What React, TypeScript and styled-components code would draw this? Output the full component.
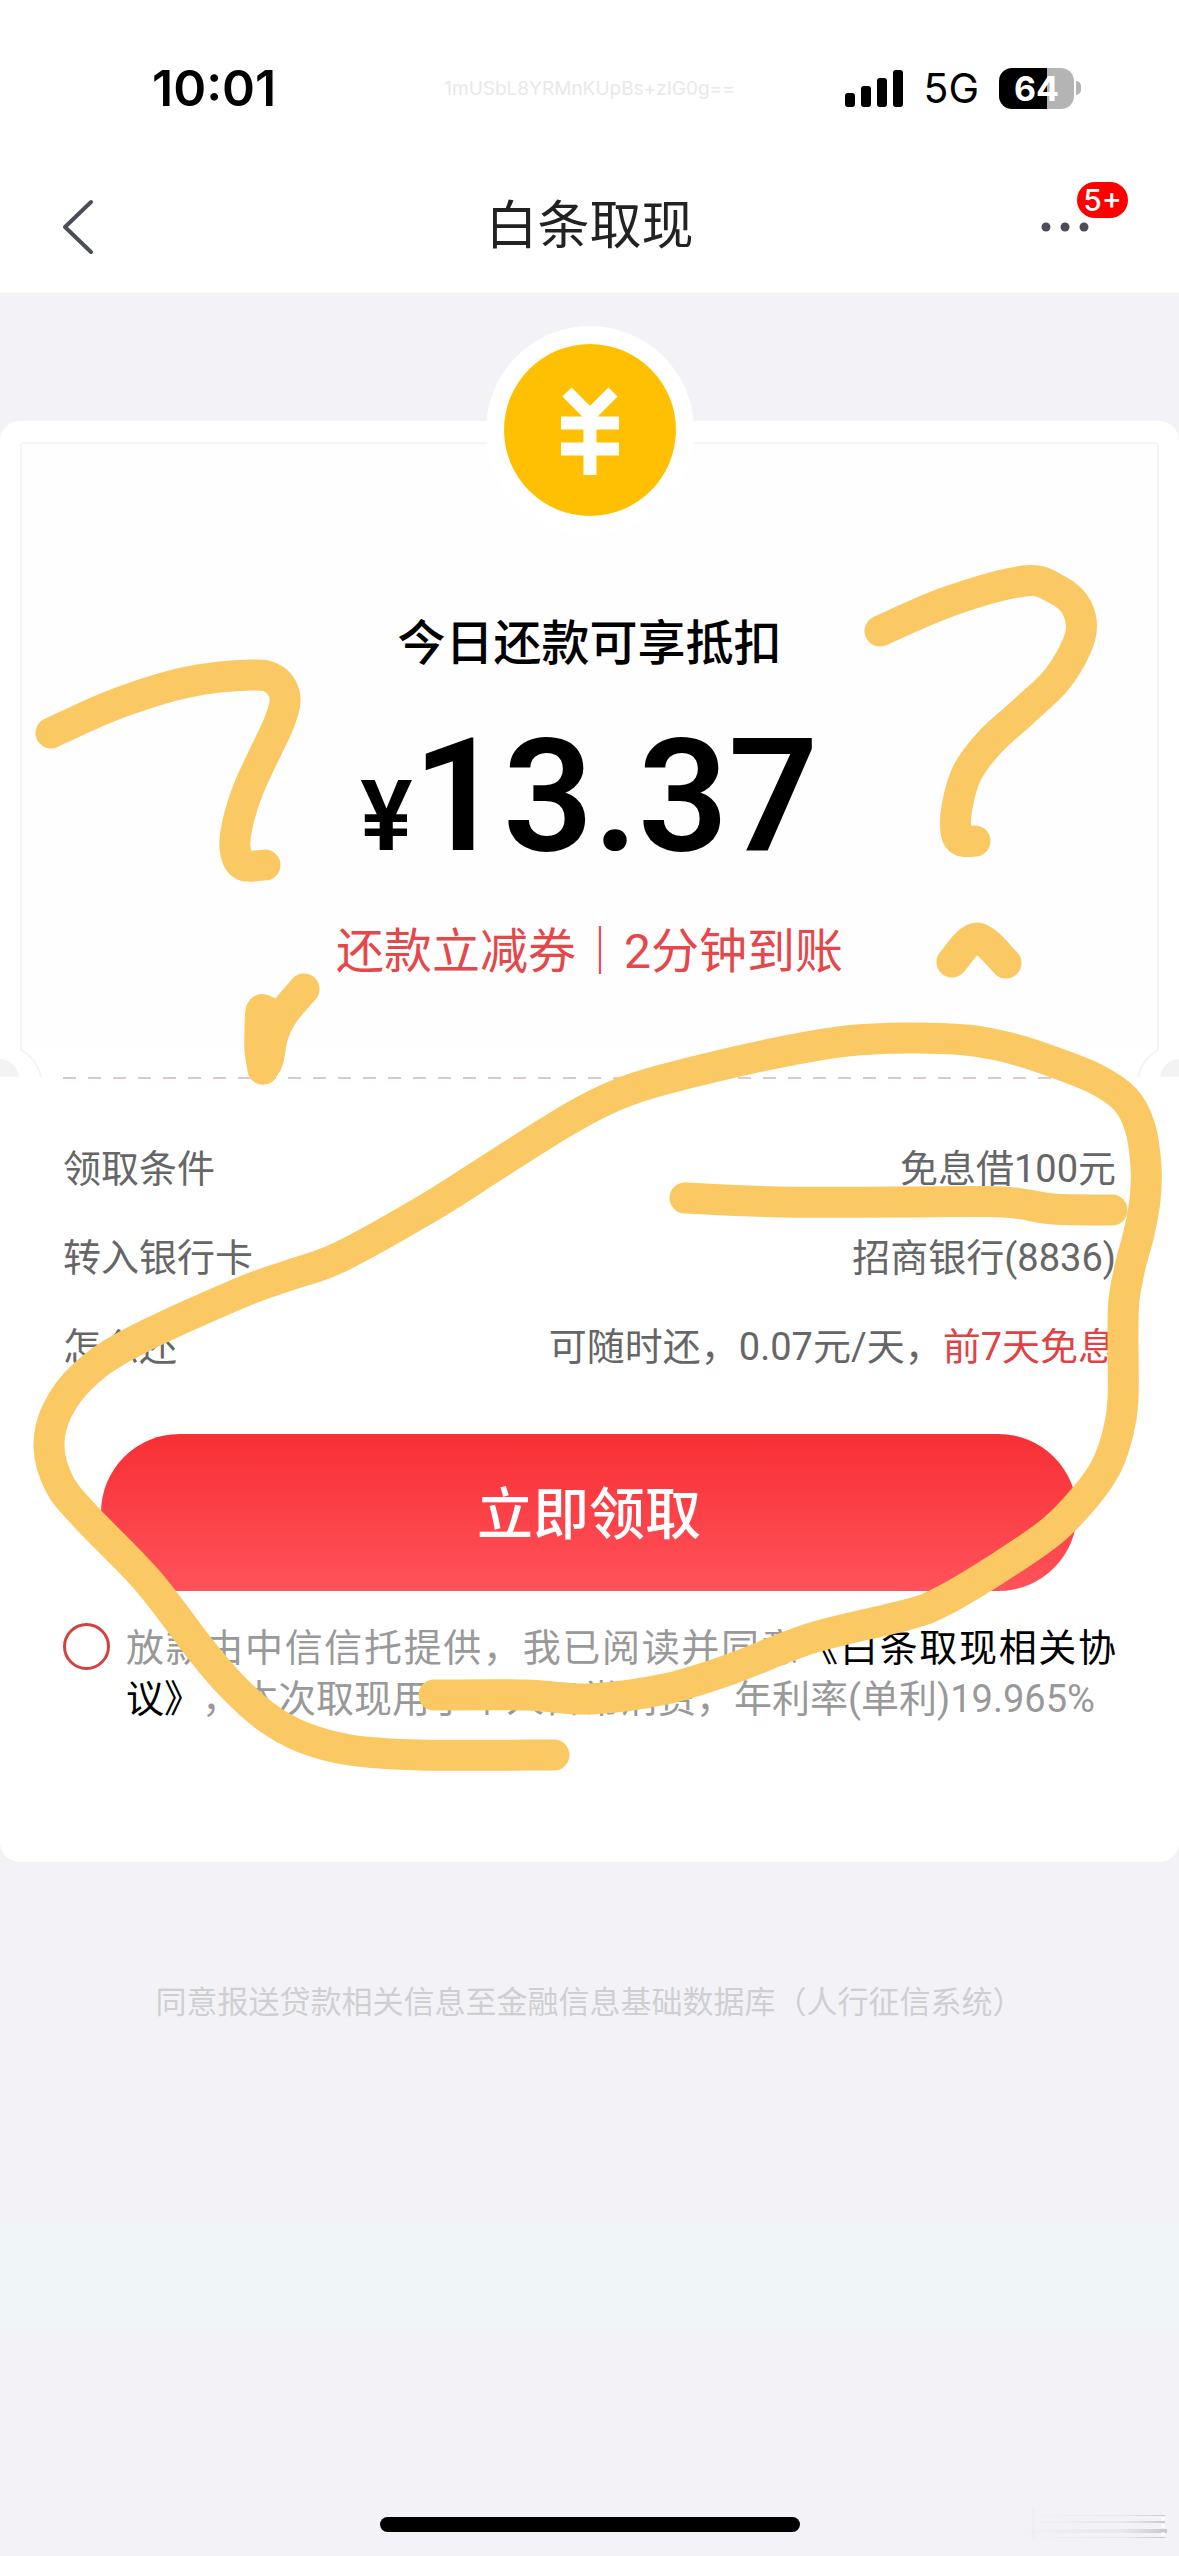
import React from 'react';
import styled, { createGlobalStyle } from 'styled-components';

const GlobalStyle = createGlobalStyle`
  *, *::before, *::after { box-sizing: border-box; }
  body {
    margin: 0;
    background: #f3f3f7;
    font-family: Roboto, "Noto Sans CJK SC", sans-serif;
    color: #000;
  }
`;

const latin = 'Inter, "Noto Sans CJK SC", sans-serif';

const Page = styled.div`
  position: relative;
  display: flex;
  flex-direction: column;
  min-height: 100vh;
`;

const StatusBar = styled.div`
  display: grid;
  grid-template-columns: 1fr auto 1fr;
  align-items: center;
  height: 176px;
  padding: 0 98px;
  background: #fff;
  font-family: ${latin};
`;

const Time = styled.span`
  padding-left: 54px;
  font-size: 50px;
  font-weight: 600;
`;

const TraceCode = styled.span`
  font-size: 19px;
  color: #e9e9e9;
`;

const StatusIcons = styled.div`
  display: flex;
  justify-content: flex-end;
  align-items: center;
  gap: 20px;
`;

const Network = styled.span`
  font-size: 41px;
  font-weight: 400;
`;

const Battery = styled.div`
  display: flex;
  align-items: center;
  gap: 2px;

  &::after {
    content: '';
    width: 5px;
    height: 14px;
    border-radius: 0 7px 7px 0;
    background: #b4b4b4;
  }
`;

const BatteryLevel = styled.span<{ $level: number }>`
  display: flex;
  justify-content: center;
  align-items: center;
  width: 75px;
  height: 41px;
  border-radius: 13px;
  background: linear-gradient(to right, #000 ${p => p.$level}%, #b4b4b4 ${p => p.$level}%);
  color: #fff;
  font-size: 34px;
  font-weight: 700;
`;

const NavBar = styled.header`
  display: grid;
  grid-template-columns: 1fr auto 1fr;
  align-items: center;
  height: 117px;
  margin-bottom: 128px;
  padding: 0 60px 15px;
  background: #fff;
`;

const IconButton = styled.button<{ $end?: boolean }>`
  position: relative;
  display: flex;
  justify-self: ${p => (p.$end ? 'end' : 'start')};
  margin-right: ${p => (p.$end ? '30px' : '0')};
  padding: 0;
  border: 0;
  background: none;
  color: #4b4e58;
`;

const Title = styled.h1`
  margin: 0;
  font-size: 52px;
  font-weight: 400;
  line-height: 72px;
  color: #222;
`;

const Badge = styled.span`
  position: absolute;
  left: 36px;
  bottom: 14px;
  width: 51px;
  height: 36px;
  border-radius: 18px;
  background: #f00;
  color: #fff;
  font-family: ${latin};
  font-size: 30px;
  font-weight: 500;
  line-height: 36px;
  text-align: center;
`;

const Card = styled.main`
  display: flex;
  flex-direction: column;
  border-radius: 20px;
  background: #fff;
`;

const Ticket = styled.section`
  display: flex;
  flex-direction: column;
  align-items: center;
  height: 608px;
  margin: 21px 20px 0;
  border: 2px solid #f5f5f5;
  border-bottom: 0;
  border-radius: 4px 4px 0 0;
  background: #fefefe;
`;

const Coin = styled.div`
  display: flex;
  flex: none;
  width: 208px;
  height: 208px;
  margin-top: -118px;
  padding: 18px;
  border-radius: 50%;
  background: #fff;
`;

const Offer = styled.h2`
  margin: 76px 0 0;
  font-size: 48px;
  font-weight: 500;
  line-height: 68px;
`;

const Amount = styled.p`
  display: flex;
  align-items: baseline;
  margin: 23px 0 0;
  font-size: 158px;
  font-weight: 600;
  line-height: 190px;
`;

const Currency = styled.span`
  font-size: 98px;
  font-weight: 600;
`;

const Highlight = styled.p`
  margin: 6px 0 0;
  font-size: 48px;
  line-height: 68px;
  color: #e4484b;
`;

const NotchRow = styled.div`
  display: flex;
  justify-content: space-between;
  height: 27px;
`;

const Divider = styled.hr`
  width: calc(100% - 126px);
  height: 2px;
  margin: 0 63px;
  border: 0;
  background: repeating-linear-gradient(to right, #ddc8cd 0 13px, transparent 13px 25px);
`;

const Details = styled.dl`
  display: flex;
  flex-direction: column;
  gap: 33px;
  margin: 62px 63px 0;
  font-size: 38px;
  line-height: 56px;
  color: #666;
`;

const DetailRow = styled.div`
  display: flex;
  justify-content: space-between;
`;

const Term = styled.dt`
  margin: 0;
`;

const Value = styled.dd`
  margin: 0;
`;

const Accent = styled.span`
  color: #e04345;
`;

const ClaimButton = styled.button`
  height: 157px;
  margin: 59px 102px 0 101px;
  padding: 0 0 6px;
  border: 0;
  border-radius: 79px;
  background: linear-gradient(#f82f35, #ff525a);
  color: #fff;
  font-family: inherit;
  font-size: 56px;
  font-weight: 500;
`;

const Consent = styled.div`
  display: flex;
  align-items: flex-start;
  gap: 16px;
  margin: 32px 63px 137px;
`;

const Check = styled.input`
  appearance: none;
  flex: none;
  width: 47px;
  height: 47px;
  margin: 0;
  border: 3px solid #d2433f;
  border-radius: 50%;

  &:checked {
    background: #d2433f;
  }
`;

const ConsentText = styled.label`
  flex: 1;
  font-size: 38px;
  line-height: 51px;
  text-align: justify;
  text-spacing-trim: space-all;
  color: #999;
`;

const Agreement = styled.a`
  color: #000;
  text-decoration: none;
`;

const Notice = styled.p`
  margin: 118px 0 0;
  font-size: 31px;
  line-height: 46px;
  text-align: center;
  text-spacing-trim: space-all;
  color: #cfcfd2;
`;

const Band = styled.div`
  height: 103px;
  margin-top: 197px;
  background: #f0f5f7;
`;

const BottomBar = styled.footer`
  display: grid;
  grid-template-columns: 1fr auto 1fr;
  align-items: center;
  margin-top: auto;
  padding: 0 12px 15px;
`;

const HomeIndicator = styled.div`
  grid-column: 2;
  width: 420px;
  height: 15px;
  border-radius: 8px;
  background: #000;
`;

const Streaks = styled.svg`
  justify-self: end;
`;

const MarkerLayer = styled.svg`
  position: absolute;
  top: 0;
  left: 0;
  width: 100%;
  pointer-events: none;
`;

type Point = [number, number];

/** Joins hand-drawn points with a Catmull-Rom curve. */
function smooth(points: Point[]): string {
  let d = `M${points[0][0]} ${points[0][1]}`;
  for (let i = 0; i < points.length - 1; i++) {
    const p0 = points[Math.max(i - 1, 0)];
    const p1 = points[i];
    const p2 = points[i + 1];
    const p3 = points[Math.min(i + 2, points.length - 1)];
    const c1 = [p1[0] + (p2[0] - p0[0]) / 6, p1[1] + (p2[1] - p0[1]) / 6];
    const c2 = [p2[0] - (p3[0] - p1[0]) / 6, p2[1] - (p3[1] - p1[1]) / 6];
    d += ` C${c1[0].toFixed(1)} ${c1[1].toFixed(1)} ${c2[0].toFixed(1)} ${c2[1].toFixed(1)} ${p2[0]} ${p2[1]}`;
  }
  return d;
}

const strokes: Point[][] = [
  [[51, 733], [116, 704], [188, 682], [252, 675], [275, 680], [285, 698], [279, 723], [263, 757], [248, 790], [238, 822], [235, 848], [243, 865], [265, 865]],
  [[880, 631], [950, 601], [1024, 581], [1056, 589], [1077, 608], [1080, 637], [1058, 678], [1024, 711], [990, 742], [967, 773], [957, 807], [956, 832], [962, 841], [975, 841]],
  [[952, 962], [977, 938], [1006, 963]],
  [[304, 989], [283, 1014], [273, 1035], [268, 1060], [263, 1069]],
  [[263, 1069], [260, 1050], [260, 1030], [261, 1011], [266, 1011]],
  [[685, 1198], [780, 1202], [900, 1202], [1003, 1202], [1053, 1209], [1112, 1210]],
  [
    [434, 1695], [526, 1695], [590, 1699], [665, 1689], [731, 1669], [812, 1638], [906, 1615], [943, 1601],
    [1000, 1567], [1052, 1531], [1085, 1497], [1106, 1467], [1118, 1433], [1123, 1400], [1123, 1333],
    [1124, 1300], [1130, 1267], [1139, 1233], [1145, 1200], [1146, 1167], [1140, 1127], [1125, 1099],
    [1094, 1078], [1048, 1060], [1006, 1047], [966, 1040], [906, 1038], [847, 1041], [786, 1051],
    [705, 1069], [638, 1087], [597, 1104], [556, 1127], [496, 1165], [430, 1207], [340, 1257],
    [290, 1275], [240, 1293], [131, 1343], [83, 1376], [57, 1411], [49, 1447], [60, 1485], [86, 1517],
    [147, 1580], [201, 1650], [231, 1685], [265, 1716], [302, 1737],
    [350, 1750], [420, 1755], [554, 1755],
  ],
];

const rows: { term: string; value: React.ReactNode }[] = [
  { term: '领取条件', value: '免息借100元' },
  { term: '转入银行卡', value: '招商银行(8836)' },
  { term: '怎么还', value: <>可随时还，0.07元/天，<Accent>前7天免息</Accent></> },
];

const Notch = ({ flip }: { flip?: boolean }) => (
  <svg width="44" height="27" viewBox="0 0 44 27" aria-hidden="true">
    <g transform={flip ? 'translate(44 0) scale(-1 1)' : undefined}>
      <path d="M0 9 A20 20 0 0 1 19 27 H0Z" fill="#f3f3f4" />
      <path d="M21 0 Q37 9 41 27" fill="none" stroke="#f3f3f3" strokeWidth="2" />
    </g>
  </svg>
);

export default function App() {
  return (
    <Page>
      <GlobalStyle />
      <StatusBar>
        <Time>10:01</Time>
        <TraceCode>1mUSbL8YRMnKUpBs+zIG0g==</TraceCode>
        <StatusIcons>
          <svg width="58" height="37" viewBox="0 0 58 37" aria-hidden="true">
            <rect x="0" y="23" width="10" height="14" rx="3" />
            <rect x="16" y="16" width="10" height="21" rx="3" />
            <rect x="32" y="8" width="10" height="29" rx="3" />
            <rect x="48" y="0" width="10" height="37" rx="3" />
          </svg>
          <Network>5G</Network>
          <Battery>
            <BatteryLevel $level={64}>64</BatteryLevel>
          </Battery>
        </StatusIcons>
      </StatusBar>

      <NavBar>
        <IconButton aria-label="返回">
          <svg width="36" height="56" viewBox="0 0 36 56" fill="none" stroke="currentColor" strokeWidth="4" strokeLinecap="round" strokeLinejoin="round">
            <path d="M31 3 L5 28 L31 53" />
          </svg>
        </IconButton>
        <Title>白条取现</Title>
        <IconButton $end aria-label="更多">
          <svg width="48" height="10" viewBox="0 0 48 10" fill="currentColor">
            <circle cx="5" cy="5" r="4.5" />
            <circle cx="24" cy="5" r="4.5" />
            <circle cx="43" cy="5" r="4.5" />
          </svg>
          <Badge>5+</Badge>
        </IconButton>
      </NavBar>

      <Card>
        <Ticket>
          <Coin>
            <svg width="172" height="172" viewBox="0 0 172 172" aria-hidden="true">
              <circle cx="86" cy="86" r="86" fill="#ffc003" />
              <g fill="none" stroke="#fff" strokeWidth="13">
                <path d="M63 48 L86 71 L109 48" />
                <path d="M86 70 V131 M57 79 H115 M57 105 H115" />
              </g>
            </svg>
          </Coin>
          <Offer>今日还款可享抵扣</Offer>
          <Amount><Currency>¥</Currency>13.37</Amount>
          <Highlight>还款立减券｜2分钟到账</Highlight>
        </Ticket>
        <NotchRow>
          <Notch />
          <Notch flip />
        </NotchRow>
        <Divider />
        <Details>
          {rows.map(row => (
            <DetailRow key={row.term}>
              <Term>{row.term}</Term>
              <Value>{row.value}</Value>
            </DetailRow>
          ))}
        </Details>
        <ClaimButton>立即领取</ClaimButton>
        <Consent>
          <Check type="checkbox" id="consent" />
          <ConsentText htmlFor="consent">
            放款由中信信托提供，我已阅读并同意<Agreement href="#agreement">《白条取现相关协议》</Agreement>，本次取现用于个人日常消费，年利率(单利)19.965%
          </ConsentText>
        </Consent>
      </Card>

      <Notice>同意报送贷款相关信息至金融信息基础数据库（人行征信系统）</Notice>
      <Band />
      <BottomBar>
        <HomeIndicator />
        <Streaks width="150" height="34" viewBox="0 0 150 34" aria-hidden="true">
          <defs>
            <linearGradient id="streak" gradientUnits="userSpaceOnUse" x1="0" y1="0" x2="150" y2="0">
              <stop offset="0" stopColor="#c8c8cc" stopOpacity="0" />
              <stop offset="0.7" stopColor="#c8c8cc" stopOpacity="0.25" />
              <stop offset="1" stopColor="#c4c4c8" stopOpacity="0.9" />
            </linearGradient>
          </defs>
          <g fill="url(#streak)">
            <rect x="14" y="8" width="134" height="1" />
            <rect x="0" y="14" width="148" height="2" />
            <rect x="0" y="22" width="150" height="4" />
            <rect x="14" y="30" width="134" height="1" />
          </g>
          <rect x="15" y="0" width="2" height="32" fill="#efeff3" />
          <g fill="#fff">
            <circle cx="146" cy="12" r="2" />
            <circle cx="146" cy="19" r="2" />
            <circle cx="146" cy="27" r="2" />
          </g>
        </Streaks>
      </BottomBar>

      <MarkerLayer viewBox="0 0 1179 2556" aria-hidden="true">
        <g fill="none" stroke="#fac964" strokeWidth="31" strokeLinecap="round" strokeLinejoin="round">
          {strokes.map((points, i) => (
            <path key={i} d={smooth(points)} />
          ))}
        </g>
      </MarkerLayer>
    </Page>
  );
}
